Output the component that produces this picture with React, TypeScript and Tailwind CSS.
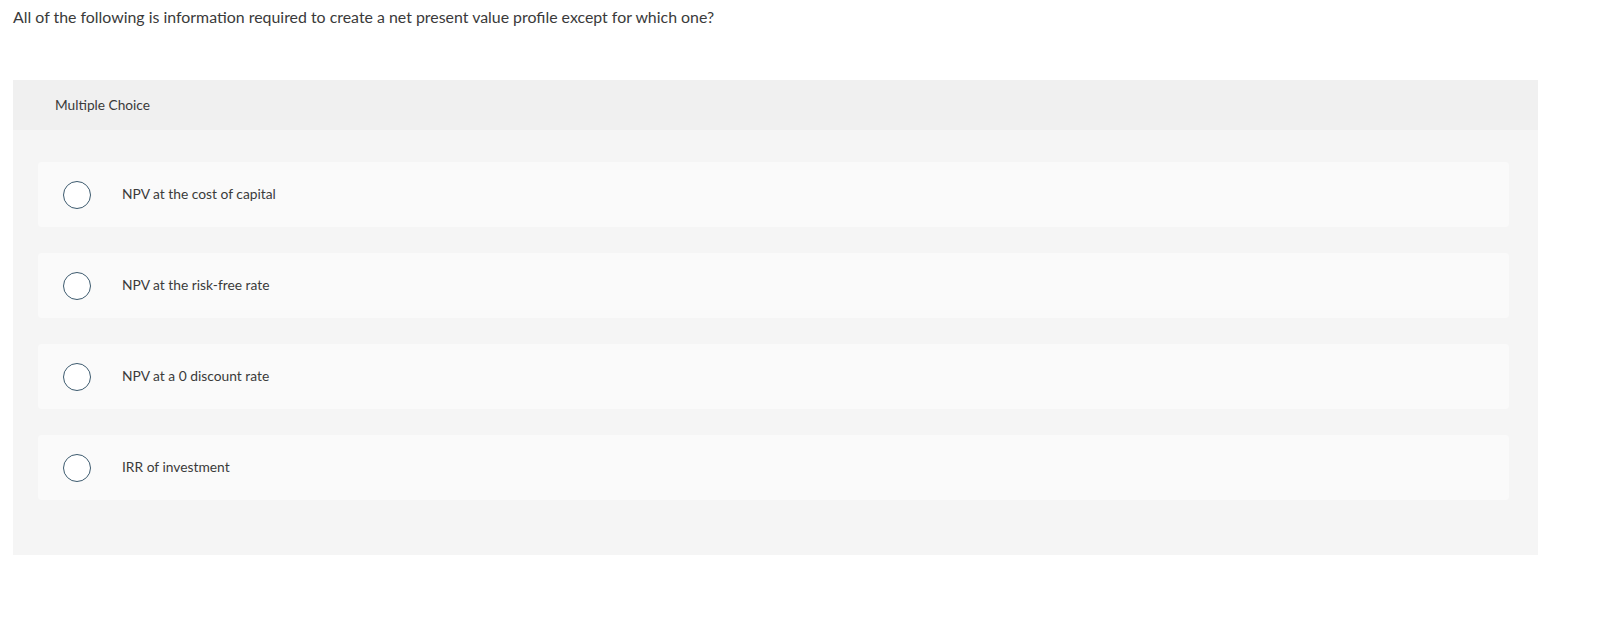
import React from "react";

const options = [
  "NPV at the cost of capital",
  "NPV at the risk-free rate",
  "NPV at a 0 discount rate",
  "IRR of investment",
];

export default function App() {
  return (
    <div className="w-[1603px] h-[621px] bg-white text-[#333333]" style={{ fontFamily: "Lato, 'Open Sans', sans-serif" }}>
      <div className="pl-[13px] pt-[7px] h-[80px] text-[15.9px] leading-[20px] text-[#3a3a3a]">
        All of the following is information required to create a net present value profile except for which one?
      </div>
      <div className="ml-[13px] w-[1525px] bg-[#f5f5f5]">
        <div className="h-[50px] bg-[#f0f0f0] flex items-center pl-[42px] text-[13.7px] text-[#3a3a3a]">
          Multiple Choice
        </div>
        <div className="pt-[32px] pb-[55px] pl-[25px] pr-[29px] flex flex-col gap-[26px]">
          {options.map((o) => (
            <div key={o} className="h-[65px] rounded-[4px] bg-[#fafafa] flex items-center pl-[25px]">
              <div className="w-[28px] h-[28px] rounded-full border-[1.5px] border-[#3c5a6e] bg-white shrink-0" />
              <div className="ml-[31px] text-[13.8px] text-[#3a3a3a]">{o}</div>
            </div>
          ))}
        </div>
      </div>
    </div>
  );
}
